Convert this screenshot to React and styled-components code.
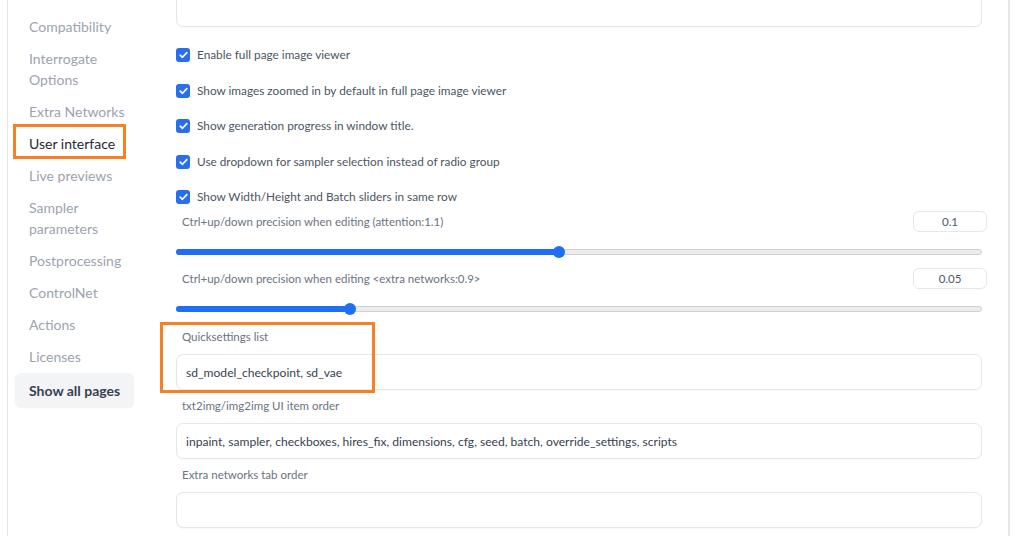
import React from "react";
import styled, { createGlobalStyle, css } from "styled-components";

const GlobalStyle = createGlobalStyle`
  html, body {
    margin: 0;
    padding: 0;
    background: #ffffff;
    font-family: "Lato", "Noto Sans", sans-serif;
    overflow: hidden;
  }
`;

const Frame = styled.div`
  display: flex;
  height: 536px;
  width: 1000px;
  margin-left: 7px;
  border-left: 1px solid #e5e7eb;
  border-right: 2px solid #e5e7eb;
  overflow: hidden;
`;

const Sidebar = styled.nav`
  width: 144px;
  box-sizing: border-box;
  flex-shrink: 0;
  padding: 16px 0 0 7px;
  display: flex;
  flex-direction: column;
  gap: 11px;
`;

const NavItem = styled.div`
  position: relative;
  padding: 0 10px 0 14px;
  font-size: 14px;
  line-height: 21px;
  color: ${(p) => (p.$active ? "#1f2937" : "#9ca3af")};

  ${(p) =>
    p.$marked &&
    css`
      &::after {
        content: "";
        position: absolute;
        left: -2px;
        top: -9px;
        width: 107px;
        height: 29px;
        border: 3px solid #f58025;
      }
    `}
`;

const ShowAll = styled.button`
  align-self: flex-start;
  margin-top: -5px;
  padding: 7px 14px 6px 14px;
  border: none;
  border-radius: 6px;
  background: #f3f4f6;
  box-shadow: 0 1px 2px rgba(0, 0, 0, 0.06);
  font-family: inherit;
  font-size: 14px;
  font-weight: 700;
  line-height: 21px;
  color: #374151;
`;

const Main = styled.main`
  flex: 1;
  padding: 0 26px 0 24px;
  display: flex;
  flex-direction: column;
`;

const TextBox = styled.div`
  height: 36px;
  box-sizing: border-box;
  border: 1px solid #e5e7eb;
  border-radius: 7px;
  background: #fff;
  box-shadow: 0 1px 1px rgba(0, 0, 0, 0.03);
  display: flex;
  align-items: center;
  padding: 0 9px;
  font-size: 12.1px;
  color: #374151;
`;

const TopBox = styled(TextBox)`
  margin-top: -14px;
  height: 41px;
`;

const CheckList = styled.div`
  display: flex;
  flex-direction: column;
  gap: 21.5px;
  margin-top: 21px;
`;

const CheckRow = styled.label`
  display: flex;
  align-items: center;
  gap: 7px;
  font-size: 11.8px;
  line-height: 14px;
  color: #4b5563;
`;

const Box = styled.span`
  width: 14px;
  height: 14px;
  border-radius: 3px;
  background: #2a6ef0;
  display: flex;
  align-items: center;
  justify-content: center;
`;

const SliderBlock = styled.div`
  display: flex;
  flex-direction: column;
  margin-top: ${(p) => p.$mt || 0}px;
`;

const SliderHead = styled.div`
  display: flex;
  align-items: center;
  justify-content: space-between;
`;

const Label = styled.div`
  font-size: 11.5px;
  color: #6b7280;
  padding-left: 6px;
  line-height: 16px;
`;

const NumberBox = styled.div`
  width: 74px;
  height: 21px;
  box-sizing: border-box;
  margin-right: -5px;
  border: 1px solid #e5e7eb;
  border-radius: 6px;
  display: flex;
  align-items: center;
  justify-content: center;
  font-size: 11.5px;
  color: #4b5563;
`;

const Track = styled.div`
  position: relative;
  margin-top: 17px;
  height: 6px;
  box-sizing: border-box;
  border: 1px solid #cfcfcf;
  border-radius: 4px;
  background: #ececec;
`;

const Fill = styled.div`
  position: absolute;
  left: -1px;
  top: -1px;
  height: 6px;
  border-radius: 4px;
  background: #1f6ff3;
`;

const Thumb = styled.div`
  position: absolute;
  top: 50%;
  width: 12px;
  height: 12px;
  border-radius: 50%;
  background: #1f6ff3;
  transform: translate(-50%, -50%);
`;

const Field = styled.div`
  position: relative;
  display: flex;
  flex-direction: column;
  gap: 9px;
  margin-top: ${(p) => p.$mt || 0}px;
`;

const Marker = styled.div`
  position: absolute;
  left: -16px;
  top: -7px;
  width: 209px;
  height: 65px;
  border: 3px solid #f58025;
  pointer-events: none;
`;

const navItems = [
  "Compatibility",
  "Interrogate\nOptions",
  "Extra Networks",
  "User interface",
  "Live previews",
  "Sampler\nparameters",
  "Postprocessing",
  "ControlNet",
  "Actions",
  "Licenses",
];

const checks = [
  "Enable full page image viewer",
  "Show images zoomed in by default in full page image viewer",
  "Show generation progress in window title.",
  "Use dropdown for sampler selection instead of radio group",
  "Show Width/Height and Batch sliders in same row",
];

function Check() {
  return (
    <Box>
      <svg width="9" height="8" viewBox="0 0 9 8">
        <path
          d="M1.2 4.2 L3.5 6.3 L7.8 1.6"
          fill="none"
          stroke="#fff"
          strokeWidth="1.7"
          strokeLinecap="round"
          strokeLinejoin="round"
        />
      </svg>
    </Box>
  );
}

function Slider({ label, value, pct, mt }) {
  return (
    <SliderBlock $mt={mt}>
      <SliderHead>
        <Label>{label}</Label>
        <NumberBox>{value}</NumberBox>
      </SliderHead>
      <Track>
        <Fill style={{ width: `${pct}%` }} />
        <Thumb style={{ left: `${pct}%` }} />
      </Track>
    </SliderBlock>
  );
}

export default function App() {
  return (
    <>
      <GlobalStyle />
      <Frame>
        <Sidebar>
          {navItems.map((item) => (
            <NavItem
              key={item}
              $active={item === "User interface"}
              $marked={item === "User interface"}
            >
              {item.split("\n").map((line) => (
                <div key={line}>{line}</div>
              ))}
            </NavItem>
          ))}
          <ShowAll>Show all pages</ShowAll>
        </Sidebar>
        <Main>
          <TopBox />
          <CheckList>
            {checks.map((c) => (
              <CheckRow key={c}>
                <Check />
                {c}
              </CheckRow>
            ))}
          </CheckList>
          <Slider
            label="Ctrl+up/down precision when editing (attention:1.1)"
            value="0.1"
            pct={47.5}
            mt={7}
          />
          <Slider
            label="Ctrl+up/down precision when editing <extra networks:0.9>"
            value="0.05"
            pct={21.5}
            mt={13}
          />
          <Field $mt={17}>
            <Marker />
            <Label>Quicksettings list</Label>
            <TextBox>sd_model_checkpoint, sd_vae</TextBox>
          </Field>
          <Field $mt={8}>
            <Label>txt2img/img2img UI item order</Label>
            <TextBox>
              inpaint, sampler, checkboxes, hires_fix, dimensions, cfg, seed,
              batch, override_settings, scripts
            </TextBox>
          </Field>
          <Field $mt={8}>
            <Label>Extra networks tab order</Label>
            <TextBox />
          </Field>
        </Main>
      </Frame>
    </>
  );
}
